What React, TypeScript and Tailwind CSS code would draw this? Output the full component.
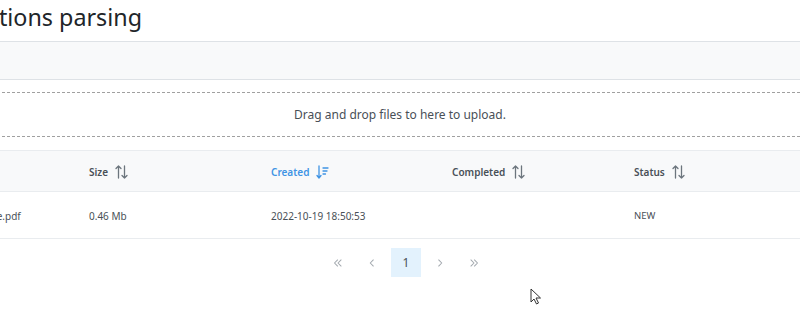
import React from "react";

const font = { fontFamily: '"Noto Sans", "Open Sans", sans-serif' };

function SortAlt() {
  return (
    <svg width="13" height="14" viewBox="0 0 13 14" fill="none" stroke="currentColor" strokeWidth="1.3" strokeLinecap="round" strokeLinejoin="round">
      <path d="M3.5 13V1M1 3.5l2.5-2.5 2.5 2.5" />
      <path d="M9.5 1v12M7 10.5l2.5 2.5 2.5-2.5" />
    </svg>
  );
}

function SortAmountDown() {
  return (
    <svg width="13" height="14" viewBox="0 0 13 14" fill="none" stroke="currentColor" strokeWidth="1.3" strokeLinecap="round" strokeLinejoin="round">
      <path d="M3 1v12M1 10.5L3 13l2-2.5" />
      <path d="M7 3h5M7 6h4M7 9h2.5" />
    </svg>
  );
}

function Chevrons({ dir, double }: { dir: "l" | "r"; double?: boolean }) {
  return (
    <svg width="14" height="14" viewBox="0 0 16 16" fill="none" stroke="currentColor" strokeWidth="1.2" strokeLinecap="round" strokeLinejoin="round">
      {double ? (
        <>
          <path d={dir === "l" ? "M7.5 4.5L4 8l3.5 3.5" : "M4.5 4.5L8 8l-3.5 3.5"} />
          <path d={dir === "l" ? "M11.5 4.5L8 8l3.5 3.5" : "M8.5 4.5L12 8l-3.5 3.5"} />
        </>
      ) : (
        <path d={dir === "l" ? "M9.5 4.5L6 8l3.5 3.5" : "M6.5 4.5L10 8l-3.5 3.5"} />
      )}
    </svg>
  );
}

const columns = [
  { label: "Name", icon: "alt" },
  { label: "Size", icon: "alt" },
  { label: "Created", icon: "down", active: true },
  { label: "Completed", icon: "alt" },
  { label: "Status", icon: "alt" },
];

export default function App() {
  return (
    <div className="relative w-[800px] h-[318px] overflow-hidden bg-white" style={font}>
      <div className="-ml-[120px] w-[1052px]">
        <div className="flex justify-end w-[262px] pt-[3px] mb-[10px]">
          <h1 className="text-[23.3px] leading-[28px] font-normal text-[#212529] whitespace-nowrap">
            Specifications parsing
          </h1>
        </div>

        <div className="px-3">
          <div className="h-[39px] bg-[#f8f9fa] border-y border-[#dee2e6]" />

          <div className="mt-[12px] h-[45px] border border-dashed border-[#a0a0a0] flex items-center justify-center pr-[12px] text-[12px] text-[#495057]">
            Drag and drop files to here to upload.
          </div>

          <table className="mt-[13px] table-fixed w-full text-[10px] border-collapse">
            <colgroup>
              <col className="w-[181px]" />
              <col className="w-[182px]" />
              <col className="w-[181px]" />
              <col className="w-[182px]" />
              <col className="w-[182px]" />
              <col />
            </colgroup>
            <thead>
              <tr className="h-[41px] bg-[#f8f9fa] border-y border-[#e9ecef] text-left">
                {columns.map((c) => (
                  <th key={c.label} className={`px-4 pt-[2px] font-semibold ${c.active ? "text-[#3f94e4]" : "text-[#495057]"}`}>
                    <span className="inline-flex items-center gap-[7px]">
                      {c.label}
                      <span className={c.active ? "text-[#3f94e4]" : "text-[#6c757d]"}>
                        {c.icon === "down" ? <SortAmountDown /> : <SortAlt />}
                      </span>
                    </span>
                  </th>
                ))}
                <th />
              </tr>
            </thead>
            <tbody>
              <tr className="h-[47px] border-b border-[#e9ecef] text-[#495057]">
                <td className="px-4 pt-[3px] whitespace-nowrap">technical1_template.pdf</td>
                <td className="px-4 pt-[3px]">0.46 Mb</td>
                <td className="px-4 pt-[3px]">2022-10-19 18:50:53</td>
                <td className="px-4 pt-[3px]"></td>
                <td className="px-4 pt-[3px] text-[9.5px]">NEW</td>
                <td />
              </tr>
            </tbody>
          </table>

          <div className="mt-[9px] flex justify-center gap-[4px] text-[#a3a9af]">
            <button className="w-[30px] h-[29px] flex items-center justify-center"><Chevrons dir="l" double /></button>
            <button className="w-[30px] h-[29px] flex items-center justify-center"><Chevrons dir="l" /></button>
            <button className="w-[30px] h-[29px] flex items-center justify-center bg-[#e3f2fd] text-[#495057] text-[12px]">1</button>
            <button className="w-[30px] h-[29px] flex items-center justify-center"><Chevrons dir="r" /></button>
            <button className="w-[30px] h-[29px] flex items-center justify-center"><Chevrons dir="r" double /></button>
          </div>
        </div>
      </div>

      <svg className="absolute left-[530px] top-[288px]" width="13" height="17" viewBox="0 0 13 17">
        <path d="M1 1v13l3-3 2.5 5 2-1-2.5-5h4.5z" fill="#fff" stroke="#333" strokeWidth="1" strokeLinejoin="round" />
      </svg>
    </div>
  );
}
